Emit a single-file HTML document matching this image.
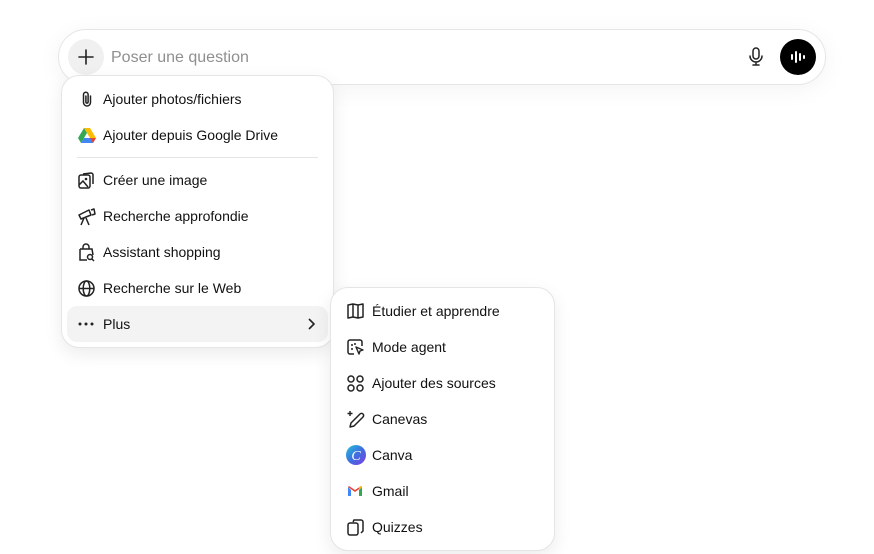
<!DOCTYPE html>
<html><head><meta charset="utf-8"><style>
*{box-sizing:border-box;margin:0;padding:0}
body{width:874px;height:554px;background:#fff;font-family:"Liberation Sans",sans-serif;position:relative;overflow:hidden;color:#0d0d0d}
.bar{position:absolute;left:58px;top:29px;width:768px;height:56px;border-radius:28px;border:1px solid #e6e6e6;background:#fff;box-shadow:0 4px 24px rgba(0,0,0,.05)}
.plus{position:absolute;left:68px;top:39px;width:36px;height:36px;border-radius:50%;background:#f0f0f0}
.ph{position:absolute;left:111px;top:49px;font-size:16px;color:#8f8f8f}
.send{position:absolute;left:780px;top:39px;width:36px;height:36px;border-radius:50%;background:#000}
.menu{position:absolute;background:#fff;border:1px solid #e5e5e5;border-radius:18px;box-shadow:0 6px 18px rgba(0,0,0,.08)}
.it{position:absolute;font-size:14px;line-height:20px;color:#111}
.ic{position:absolute}
.hl{position:absolute;left:67px;top:306px;width:261px;height:36px;background:#f3f3f3;border-radius:10px}
</style></head><body>
<div class="bar"></div>
<div class="plus"></div>
<svg class="ic" style="left:78px;top:49px" width="16" height="16" viewBox="0 0 16 16"><path d="M8 1v14M1 8h14" stroke="#222" stroke-width="1.6" stroke-linecap="round"/></svg>
<div class="ph">Poser une question</div>
<svg class="ic" style="left:748px;top:47px" width="16" height="20" viewBox="0 0 16 20"><rect x="5" y="1" width="6" height="11" rx="3" fill="none" stroke="#222" stroke-width="1.5"/><path d="M2 9a6 6 0 0 0 12 0M8 15v3M5 18h6" fill="none" stroke="#222" stroke-width="1.5" stroke-linecap="round"/></svg>
<div class="send"></div>
<svg class="ic" style="left:788px;top:47px" width="20" height="20" viewBox="0 0 20 20"><path d="M4 8v4M8 5v10M12 7v6M16 9v2" stroke="#fff" stroke-width="2" stroke-linecap="round"/></svg>

<div class="menu" style="left:61px;top:75px;width:273px;height:273px"></div>
<div class="hl"></div>
<div style="position:absolute;left:77px;top:157px;width:241px;height:1px;background:#e5e5e5"></div>

<svg class="ic" style="left:78px;top:90px" width="18" height="18" viewBox="0 0 18 18"><path d="M12.5 6v6.5a3.5 3.5 0 0 1-7 0V4.5a2.3 2.3 0 0 1 4.6 0V12a1.1 1.1 0 0 1-2.2 0V6" fill="none" stroke="#222" stroke-width="1.5" stroke-linecap="round"/></svg>
<div class="it" style="left:103px;top:89px">Ajouter photos/fichiers</div>
<svg class="ic" style="left:78px;top:127px" width="18" height="16" viewBox="0 0 18 16"><path d="M6 1h6l6 10H12z" fill="#fbbc04"/><path d="M6 1L0 11l3 5 6-10z" fill="#34a853"/><path d="M3 16h12l3-5H6z" fill="#4285f4"/><path d="M12 11h6l-3 5z" fill="#ea4335"/></svg>
<div class="it" style="left:103px;top:125px">Ajouter depuis Google Drive</div>
<svg class="ic" style="left:77px;top:171px" width="19" height="19" viewBox="0 0 19 19"><rect x="2" y="4" width="11" height="13" rx="2" fill="none" stroke="#222" stroke-width="1.5"/><path d="M6 3l8-1a2 2 0 0 1 2 2v9" fill="none" stroke="#222" stroke-width="1.5"/><path d="M2 14l4-4 5 6" fill="none" stroke="#222" stroke-width="1.5"/><circle cx="9" cy="8" r="1.3" fill="#222"/></svg>
<div class="it" style="left:103px;top:170px">Créer une image</div>
<svg class="ic" style="left:77px;top:207px" width="19" height="19" viewBox="0 0 19 19"><path d="M2 8l10-5 2 5-10 4zM14 3l3-1 1 5-3 1M7 11l-3 7M9 11l3 7" fill="none" stroke="#222" stroke-width="1.5" stroke-linejoin="round"/></svg>
<div class="it" style="left:103px;top:206px">Recherche approfondie</div>
<svg class="ic" style="left:77px;top:243px" width="19" height="19" viewBox="0 0 19 19"><path d="M3 6h12l1 6M10 17H3L3 6M6 6V4a3 3 0 0 1 6 0v2" fill="none" stroke="#222" stroke-width="1.5"/><circle cx="13" cy="14" r="2.5" fill="none" stroke="#222" stroke-width="1.5"/><path d="M15 16l2 2" stroke="#222" stroke-width="1.5"/></svg>
<div class="it" style="left:103px;top:242px">Assistant shopping</div>
<svg class="ic" style="left:77px;top:279px" width="19" height="19" viewBox="0 0 19 19"><circle cx="9.5" cy="9.5" r="7.5" fill="none" stroke="#222" stroke-width="1.5"/><ellipse cx="9.5" cy="9.5" rx="3.3" ry="7.5" fill="none" stroke="#222" stroke-width="1.5"/><path d="M2 9.5h15" stroke="#222" stroke-width="1.5"/></svg>
<div class="it" style="left:103px;top:278px">Recherche sur le Web</div>
<svg class="ic" style="left:78px;top:322px" width="16" height="4" viewBox="0 0 16 4"><circle cx="2" cy="2" r="1.5" fill="#222"/><circle cx="8" cy="2" r="1.5" fill="#222"/><circle cx="14" cy="2" r="1.5" fill="#222"/></svg>
<div class="it" style="left:103px;top:314px">Plus</div>
<svg class="ic" style="left:307px;top:318px" width="8" height="12" viewBox="0 0 8 12"><path d="M2 1l5 5-5 5" fill="none" stroke="#222" stroke-width="1.6"/></svg>

<div class="menu" style="left:330px;top:287px;width:225px;height:264px"></div>
<svg class="ic" style="left:346px;top:302px" width="19" height="18" viewBox="0 0 19 18"><path d="M2 3l5-1 5 1 5-1v13l-5 1-5-1-5 1z M7 2v13M12 3v13" fill="none" stroke="#222" stroke-width="1.5" stroke-linejoin="round"/></svg>
<div class="it" style="left:372px;top:301px">Étudier et apprendre</div>
<svg class="ic" style="left:346px;top:338px" width="19" height="19" viewBox="0 0 19 19"><path d="M8 16H4a2 2 0 0 1-2-2V4a2 2 0 0 1 2-2h10a2 2 0 0 1 2 2v4" fill="none" stroke="#222" stroke-width="1.5"/><path d="M10 9l7 3-3 1-1 3z" fill="none" stroke="#222" stroke-width="1.4" stroke-linejoin="round"/><circle cx="6" cy="7" r="1" fill="#222"/><circle cx="9" cy="6" r="1" fill="#222"/><circle cx="6" cy="11" r="1" fill="#222"/></svg>
<div class="it" style="left:372px;top:337px">Mode agent</div>
<svg class="ic" style="left:346px;top:374px" width="19" height="19" viewBox="0 0 19 19"><circle cx="5" cy="5" r="3" fill="none" stroke="#222" stroke-width="1.5"/><circle cx="14" cy="5" r="3" fill="none" stroke="#222" stroke-width="1.5"/><circle cx="5" cy="14" r="3" fill="none" stroke="#222" stroke-width="1.5"/><circle cx="14" cy="14" r="3" fill="none" stroke="#222" stroke-width="1.5"/></svg>
<div class="it" style="left:372px;top:373px">Ajouter des sources</div>
<svg class="ic" style="left:346px;top:410px" width="19" height="19" viewBox="0 0 19 19"><path d="M4 17l1-4 9-9a2 2 0 0 1 3 3l-9 9z" fill="none" stroke="#222" stroke-width="1.5" stroke-linejoin="round"/><path d="M4 1v5M1.5 3.5h5" stroke="#222" stroke-width="1.4"/></svg>
<div class="it" style="left:372px;top:409px">Canevas</div>
<svg class="ic" style="left:346px;top:445px" width="20" height="20" viewBox="0 0 20 20"><defs><linearGradient id="g" x1="0" y1="0" x2="1" y2="1"><stop offset="0" stop-color="#1fc4d8"/><stop offset=".5" stop-color="#3f6fe0"/><stop offset="1" stop-color="#7d3ee0"/></linearGradient></defs><circle cx="10" cy="10" r="10" fill="url(#g)"/><text x="10" y="15" text-anchor="middle" font-family="Liberation Serif,serif" font-style="italic" font-size="14" fill="#fff">C</text></svg>
<div class="it" style="left:372px;top:445px">Canva</div>
<svg class="ic" style="left:348px;top:486px" width="14" height="10" viewBox="0 0 14 10"><path d="M0 1v9h3V4z" fill="#4285f4"/><path d="M14 1v9h-3V4z" fill="#34a853"/><path d="M0 1l7 5 7-5-1-1-6 4-6-4z" fill="#ea4335"/><path d="M11 4l3-3-1-1-2 1z" fill="#fbbc04"/></svg>
<div class="it" style="left:372px;top:481px">Gmail</div>
<svg class="ic" style="left:346px;top:518px" width="19" height="19" viewBox="0 0 19 19"><rect x="2" y="5" width="10" height="12" rx="2" fill="none" stroke="#222" stroke-width="1.5"/><path d="M7 4l1-2h7a2 2 0 0 1 2 2v9l-2 2" fill="none" stroke="#222" stroke-width="1.5"/></svg>
<div class="it" style="left:372px;top:517px">Quizzes</div>
</body></html>
